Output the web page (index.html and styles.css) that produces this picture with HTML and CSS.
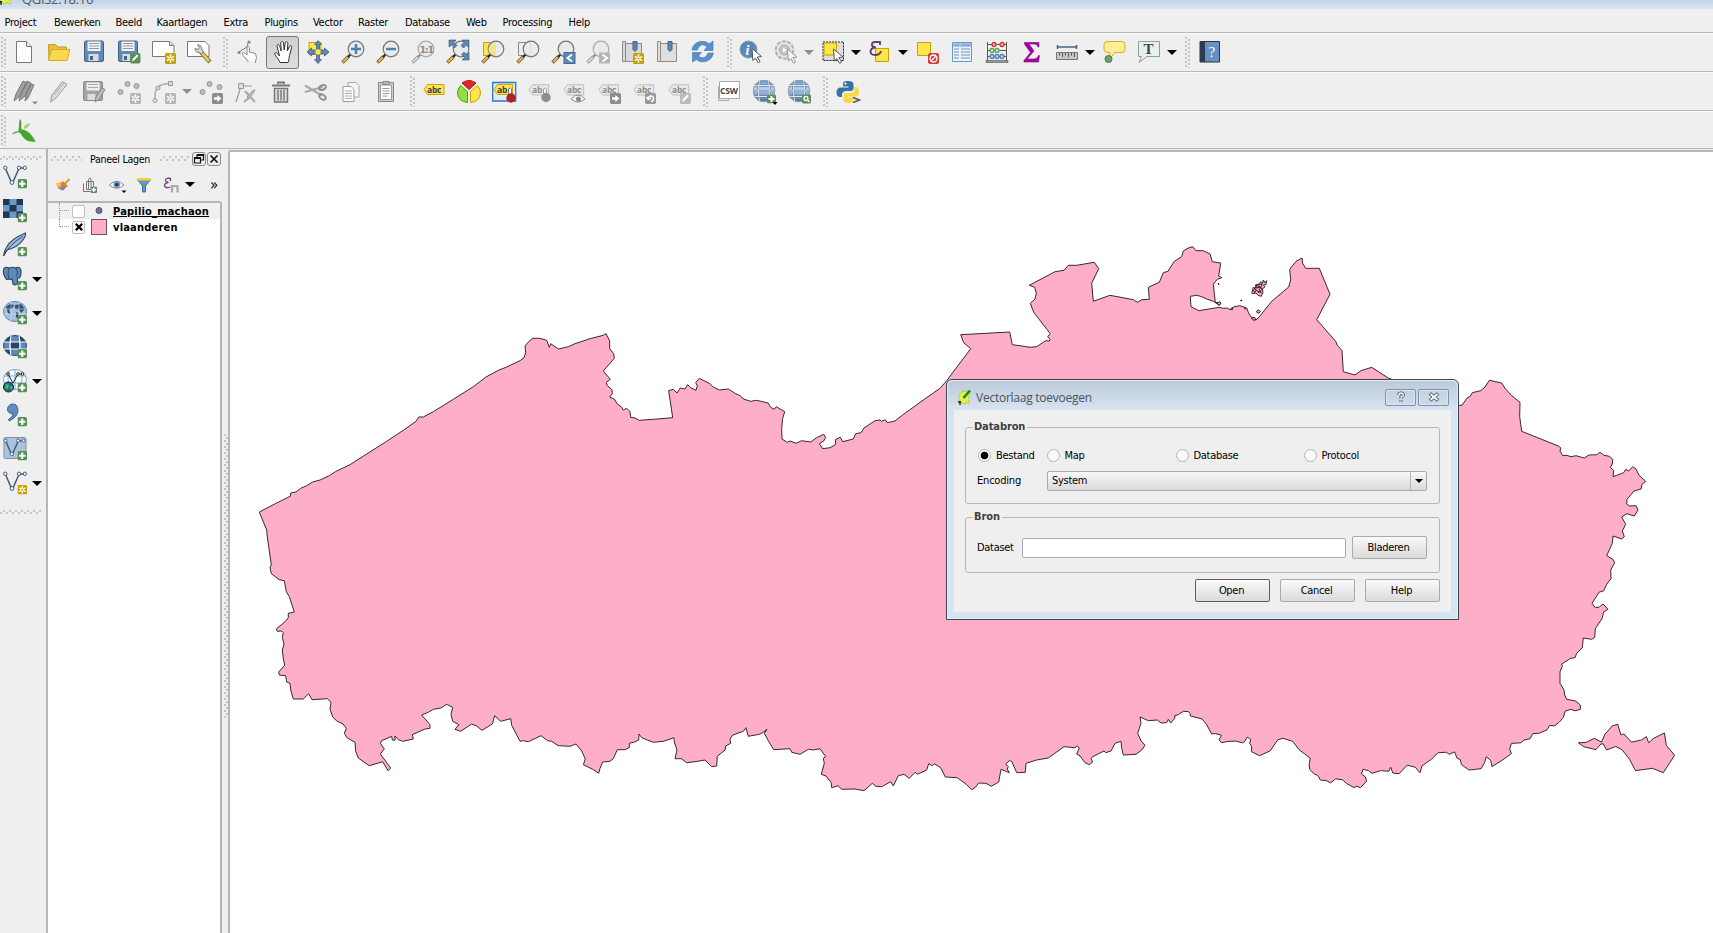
FILE: index.html
```
<!DOCTYPE html>
<html lang="nl">
<head>
<meta charset="utf-8">
<title>QGIS</title>
<link rel="stylesheet" href="styles.css">
</head>
<body>
<svg class="defs" width="0" height="0">
  <defs>
    <linearGradient id="gBlue" x1="0" y1="0" x2="0" y2="1"><stop offset="0" stop-color="#5f97d3"/><stop offset=".4" stop-color="#b5d3f3"/><stop offset="1" stop-color="#3f74b0"/></linearGradient>
    <symbol id="plus" viewBox="0 0 9 9"><rect width="9" height="9" rx="1.5" fill="#5b8f5a"/><path d="M4.5 1.5v6M1.5 4.5h6" stroke="#fff" stroke-width="2"/></symbol>
    <symbol id="star" viewBox="0 0 11 11"><rect width="11" height="11" rx="1.5" fill="#c8a000"/><path d="M5.5 1.2v8.6M1.8 3.4l7.4 4.2M9.2 3.4L1.8 7.6" stroke="#fff" stroke-width="1.5"/><circle cx="5.5" cy="5.5" r="1.1" fill="#c8a000"/></symbol>
    <symbol id="starg" viewBox="0 0 11 11"><rect width="11" height="11" rx="1.5" fill="#b5b5b5"/><path d="M5.5 1.2v8.6M1.8 3.4l7.4 4.2M9.2 3.4L1.8 7.6" stroke="#fff" stroke-width="1.5"/><circle cx="5.5" cy="5.5" r="1.1" fill="#b5b5b5"/></symbol>
    <symbol id="go" viewBox="0 0 11 11"><rect width="11" height="11" rx="1.5" fill="#8c8c8c"/><path d="M2 4.3h3.4V2L9.4 5.5 5.4 9V6.7H2z" fill="#fff"/></symbol>
    <symbol id="lens" viewBox="0 0 24 24"><path d="M1.500 22.500l6-6" stroke="#555" stroke-width="3.400"/><path d="M2 22l5-5" stroke="#f2b92c" stroke-width="2"/><path d="M7 17l3-3" stroke="#222" stroke-width="2.200"/><circle cx="15" cy="9" r="7.800" fill="#e9e9e9" fill-opacity=".85" stroke="#777" stroke-width="1.200"/></symbol>
    <symbol id="lensg" viewBox="0 0 24 24"><path d="M1.500 22.500l6-6" stroke="#999" stroke-width="3.200"/><path d="M2 22l5-5" stroke="#e8e8e8" stroke-width="1.500"/><path d="M7 17l3-3" stroke="#888" stroke-width="2"/><circle cx="15" cy="9" r="7.800" fill="#e9e9e9" fill-opacity=".85" stroke="#aaa" stroke-width="1.200"/></symbol>
    <symbol id="cur" viewBox="0 0 12 16"><path d="M1 1l9.500 8-4.200.5 2.800 4.500-2 1.300-2.700-4.700L1.800 13z" fill="#fff" stroke="#555" stroke-width="1"/></symbol>
    <symbol id="tag" viewBox="0 0 24 24"><path d="M2 9.500l3.500-4.700H21.700V15H5.500z" fill="#e9e9e9" stroke="#bdbdbd"/></symbol>
    <symbol id="vee" viewBox="0 0 24 24"><path d="M2.500 3.500l6 14M10 17l5.500-12.500M17 3h4" stroke="#3f5a75" stroke-width="1.500" fill="none"/><g fill="#fff" stroke="#3f5a75"><circle cx="2.300" cy="2.800" r="1.700"/><circle cx="16" cy="2.800" r="1.700"/><circle cx="21.800" cy="2.800" r="1.700"/><circle cx="9" cy="17.500" r="1.900"/></g></symbol>
    <symbol id="globe" viewBox="0 0 24 24"><circle cx="12" cy="11" r="10.800" fill="url(#gBlue)" stroke="#8d9aa8"/><path d="M7.500 1q-3 10 0 20M16.500 1q3 10 0 20M2.500 5.500h19M1 11h22M2.500 16.500h19" stroke="#64758a" stroke-width="1.800" fill="none"/><path d="M7.500 1q-3 10 0 20M16.500 1q3 10 0 20M2.500 5.500h19M1 11h22M2.500 16.500h19" stroke="#e2e6ea" stroke-width="1" fill="none"/></symbol>
    <symbol id="qgis" viewBox="0 0 13 15"><path d="M8 1C3 1 1 4 1 8s3 6 6 6l1-2 2 2 2-1-2-3 2-6-2-3z" fill="#dff04b" stroke="#b1bd3d" stroke-dasharray="1.500 1"/><path d="M12 .5L5.500 8" stroke="#108b28" stroke-width="2.600"/><path d="M0 12h3m-1-1v4" stroke="#222" stroke-width="1.300"/></symbol>
  </defs>
</svg>

<div class="window">
  <div class="titlebar"><svg width="13" height="15"><use href="#qgis"/></svg><span>QGIS2.18.16</span></div>
  <nav class="menubar"><span>Project</span><span>Bewerken</span><span>Beeld</span><span>Kaartlagen</span><span>Extra</span><span>Plugins</span><span>Vector</span><span>Raster</span><span>Database</span><span>Web</span><span>Processing</span><span>Help</span></nav>

  <div class="toolbar">
    <i class="grip first"></i>
    <b class="slot"><svg viewBox="0 0 24 24"><path d="M4.500 1.500h10l5 5v16h-15z" fill="#fff" stroke="#777"/><path d="M14.500 1.500v5h5" fill="#eee" stroke="#777"/></svg></b>
    <b class="slot"><svg viewBox="0 0 24 24"><path d="M1.500 4.500h7l2 2.500h9v4h-15L2 20z" fill="#e9bf3c" stroke="#c59a25"/><path d="M4.500 9.500h18.500L20 20.500H1.500z" fill="#fbd84e" stroke="#d8aa2e"/></svg></b>
    <b class="slot"><svg viewBox="0 0 24 24"><rect x="2.500" y="1" width="19" height="20.500" rx="1.500" fill="#5e8ab8" stroke="#49617b"/><path d="M5.500 1.500h13v9.500h-13z" fill="#f4f6f8"/><path d="M7 3.500h10M7 6h10M7 8.500h10" stroke="#8b99a7"/><path d="M6.500 14h10v7h-10z" fill="#d7dde4"/><path d="M8 16h3v4H8z" fill="#49617b"/></svg></b>
    <b class="slot"><svg viewBox="0 0 24 24"><rect x="1.500" y="1" width="19" height="20.500" rx="1.500" fill="#5e8ab8" stroke="#49617b"/><path d="M4.500 1.500h13v9.500h-13z" fill="#f4f6f8"/><path d="M6 3.500h10M6 6h10M6 8.500h10" stroke="#8b99a7"/><path d="M5.500 14h10v7h-10z" fill="#d7dde4"/><path d="M7 16h3v4H7z" fill="#49617b"/><rect x="13" y="13" width="10.500" height="10.500" rx="2" fill="#5b8f5a"/><path d="M15 21.500l1-3 4-4 1.500 1.500-4 4z" fill="#fff"/></svg></b>
    <b class="slot"><svg viewBox="0 0 24 24"><path d="M.5 1.500h17.500l4 4v11H.5z" fill="#fff" stroke="#777"/><path d="M17.500 1.500v4h4" fill="#ddd" stroke="#777"/><use href="#star" x="13" y="13" width="11" height="11"/></svg></b>
    <b class="slot"><svg viewBox="0 0 24 24"><path d="M.5 1.500h17.500l4 4v11H.5z" fill="#fff" stroke="#777"/><path d="M14 12l9 10" stroke="#8d7a37" stroke-width="4.500"/><path d="M15 13l7 8" stroke="#ecd064" stroke-width="2.500"/><path d="M8 8.500q0 4 4.500 4.200L14.500 14l2-2-1.500-2.500Q15 5 10.500 4.800l2 3-1.500 1.700z" fill="#d8d8d8" stroke="#777"/></svg></b>
    <i class="grip"></i>
    <b class="slot"><svg viewBox="0 0 24 24"><path d="M3 12l8-5 1.500-5.500 2 .5" stroke="#777" fill="none"/><path d="M7.500 16q-2-2-1-3t3 .5l1.500 1.500V8c0-2 2.500-2 2.500 0v4l6 1.500 1 4-1.500 5.500" fill="#fff" stroke="#888"/><path d="M7.500 16l5 6" stroke="#888"/><circle cx="3" cy="12.500" r="1.500" fill="#888"/><circle cx="13" cy="2" r="1.500" fill="#888"/></svg></b>
    <b class="slot on"><svg viewBox="0 0 24 24"><path d="M9 22.500c-1-3-3.500-5-5-8-1-2 1.500-2.500 3-.5l1.500 2L6 6c0-2 2-2 2.700 0l1.500 5L9.700 3c0-2 2.600-2 2.800 0l.7 7 1-7c.3-2 2.600-1.500 2.600.4l-.4 7.500 2-4.500c1-1.500 2.700-.7 2.200 1l-2.100 8.100c-.6 3-.5 5-1.500 7z" fill="#fff" stroke="#333"/></svg></b>
    <b class="slot"><svg viewBox="0 0 24 24"><path d="M3 2.500h12v12H3z" fill="#fde64b" stroke="#c8a000"/><path d="M12 .5l3.500 4h-2V10h5V8l4.500 4-4.500 4v-2h-5v5.500h2L12 23.500l-3.500-4h2V14h-5v2L1 12l4.500-4v2h5V4.500h-2z" fill="#5c88b8" stroke="#38516d" stroke-width=".7"/><path d="M9.500 9.500h5v5h-5z" fill="#fde64b"/></svg></b>
    <b class="slot"><svg viewBox="0 0 24 24"><use href="#lens"/><path d="M15 4v10M10 9h10" stroke="#4c80b5" stroke-width="2.500"/></svg></b>
    <b class="slot"><svg viewBox="0 0 24 24"><use href="#lens"/><path d="M10 9h10" stroke="#4c80b5" stroke-width="2.500"/></svg></b>
    <b class="slot"><svg viewBox="0 0 24 24"><use href="#lensg"/><text x="8.800" y="12.500" class="t8b">1:1</text></svg></b>
    <b class="slot"><svg viewBox="0 0 24 24"><use href="#lens"/><path d="M3 0h7L8 2.500l3 3L8.500 8l-3-3L3 7zM23 0v7l-2.500-2-3 3L15 5.500l3-3L16 0zM23 20h-7l2.500-2.500-3-3 2.500-2.500 3 3L23 12.500z" fill="#5c88b8" stroke="#38516d" stroke-width=".6"/></svg></b>
    <b class="slot"><svg viewBox="0 0 24 24"><path d="M2.500 2.500h12v13h-12z" fill="#fde64b" stroke="#c8a000"/><use href="#lens"/><path d="M9 5h5.500v10H12q-7-4-3-10z" fill="#f3e589"/></svg></b>
    <b class="slot"><svg viewBox="0 0 24 24"><path d="M2.500 2.500h12v13h-12z" fill="#eee" stroke="#888"/><use href="#lens"/></svg></b>
    <b class="slot"><svg viewBox="0 0 24 24"><use href="#lens"/><rect x="13" y="12.500" width="11" height="11" fill="#5c88b8" stroke="#47698c"/><path d="M21 14.500l-4.500 3.500 4.500 3.500" stroke="#fff" stroke-width="2" fill="none"/></svg></b>
    <b class="slot"><svg viewBox="0 0 24 24"><use href="#lensg"/><rect x="13" y="12.500" width="11" height="11" fill="#b5b5b5"/><path d="M16.500 14.500L21 18l-4.500 3.500" stroke="#fff" stroke-width="2" fill="none"/></svg></b>
    <b class="slot"><svg viewBox="0 0 24 24"><path d="M1.500 1.500h3v20h-3zM4.500 3.500h16v18h-16z" fill="#d9d9d9" stroke="#8b8b8b"/><path d="M12 1.500h4v8l-2 2-2-2z" fill="#5c88b8" stroke="#3e5f80"/><use href="#star" x="12" y="13" width="11" height="11"/></svg></b>
    <b class="slot"><svg viewBox="0 0 24 24"><path d="M1.500 1.500h3v20h-3zM4.500 3.500h16v18h-16z" fill="#dedede" stroke="#8b8b8b"/><path d="M12 1.500h4v8l-2 2-2-2z" fill="#5c88b8" stroke="#3e5f80"/></svg></b>
    <b class="slot"><svg viewBox="0 0 24 24"><path d="M1 10C2 1 14-1 18 4l4-3v9.500h-9l3-3.500C12 3 8 5 6.500 10zM22.500 13C21 22 10 24 5.500 19.500L1.500 22v-9.500h9l-3 3.500c4 3.500 8 1.500 9.500-3z" fill="#5a90cc" stroke="#3e74b0" stroke-width=".6"/></svg></b>
    <i class="grip g13"></i>
    <b class="slot"><svg viewBox="0 0 24 24"><circle cx="9.500" cy="9.500" r="8.500" fill="#5c88b8" stroke="#7f9dbd"/><text x="6.500" y="15" class="info">i</text><use href="#cur" x="12" y="7.500" width="12" height="16"/></svg></b>
    <b class="slot dim"><svg viewBox="0 0 24 24"><circle cx="10.500" cy="10" r="8.800" fill="#ddd" stroke="#888" stroke-width="2" stroke-dasharray="4 1.500"/><circle cx="10.500" cy="10" r="5" fill="#aaa" stroke="#777"/><path d="M9 7.500l4 2.500-4 2.500z" fill="#fff"/><use href="#cur" x="12.500" y="8" width="12" height="16"/></svg></b>
    <i class="drop gray"></i>
    <b class="slot"><svg viewBox="0 0 24 24"><rect x="2" y="2" width="20.500" height="18.500" fill="#ddd" stroke="#222" stroke-dasharray="2 1"/><path d="M3 3h12.500v12H3z" fill="#fde64b" stroke="#c8a000"/><use href="#cur" x="11" y="8" width="13" height="16"/></svg></b>
    <i class="drop"></i>
    <b class="slot"><svg viewBox="0 0 24 24"><path d="M7.500 8.500h13v13h-13z" fill="#fde64b" stroke="#c8a000"/><path d="M12 5V2H7Q3.500 2 4 5q.5 2.500 4 2.500Q2.500 8 2.500 11.500T7 15q5 0 6-4" fill="none" stroke="#653d73" stroke-width="1.900"/></svg></b>
    <i class="drop"></i>
    <b class="slot"><svg viewBox="0 0 24 24"><path d="M2.500 2.500h13v13h-13z" fill="#fde64b" stroke="#c8a000"/><rect x="13" y="13" width="11" height="11" rx="2" fill="#da3b3b"/><circle cx="18.500" cy="18.500" r="3.500" fill="#da3b3b" stroke="#fff" stroke-width="1.300"/><path d="M16 21l5-5" stroke="#fff" stroke-width="1.300"/></svg></b>
    <b class="slot"><svg viewBox="0 0 24 24"><path d="M2.500 2.500h19v19h-19z" fill="#eaf2fa" stroke="#6a96c6"/><path d="M3 3h18v4H3z" fill="#a8c8ea"/><path d="M4 5h5m2 0h9M4 9h5m2 0h9M4 12h5m2 0h9M4 15h5m2 0h9M4 18h5m2 0h9" stroke="#6a96c6" stroke-width="1.100"/></svg></b>
    <b class="slot"><svg viewBox="0 0 24 24"><path d="M2.500 2v19M21.500 2v19M2.500 4.500h19M2.500 10.500h19M2.500 16.500h19" stroke="#555" fill="none"/><path d="M1 20.500h22v2H1z" fill="#999" stroke="#555" stroke-width=".6"/><g stroke-width="1.300"><g fill="#f3b5b5" stroke="#c33"><circle cx="9" cy="4.500" r="2"/><circle cx="17" cy="4.500" r="2"/></g><g fill="#cfeccb" stroke="#5aa457"><circle cx="7" cy="10.500" r="2"/><circle cx="12" cy="10.500" r="2"/></g><g fill="#bcd4ea" stroke="#4c80b5"><circle cx="7" cy="16.500" r="2"/><circle cx="12" cy="16.500" r="2"/><circle cx="17" cy="16.500" r="2"/></g></g></svg></b>
    <b class="slot"><svg viewBox="0 0 24 24"><path d="M4.500 2.500H19v4.500h-1Q17.500 4 14 4H9l5 7-7 8h7q3.500 0 4.500-3.500h1L18.500 22H4v-1.500l6.500-8L4.500 4z" fill="#a400a4" stroke="#7d007d" stroke-width=".6"/></svg></b>
    <b class="slot"><svg viewBox="0 0 24 24"><path d="M2 7h20M2.500 5v4M21.500 5v4" stroke="#46658a" stroke-width="1.600"/><path d="M1.500 12.500h21v7h-21z" fill="#c6c6c6" stroke="#777"/><path d="M4.500 13v2.500M7.500 13v4M10.500 13v2.500M13.500 13v4M16.500 13v2.500M19.500 13v4" stroke="#555"/></svg></b>
    <i class="drop"></i>
    <b class="slot"><svg viewBox="0 0 24 24"><path d="M5 1.500h15q3 0 3 3v5q0 3-3 3h-7L7.500 19 8 12.500H5q-3 0-3-3v-5q0-3 3-3z" fill="#fbef96" stroke="#d2ac28"/><circle cx="6.500" cy="19" r="3.500" fill="#6ba46a" stroke="#4c774b"/></svg></b>
    <b class="slot"><svg viewBox="0 0 24 24"><path d="M1.500 1.500h21v15H10L2 22.500l2.500-6h-3z" fill="#e6eff2" stroke="#999"/><text x="6.500" y="14" class="tee">T</text></svg></b>
    <i class="drop"></i>
    <i class="grip"></i>
    <b class="slot"><svg viewBox="0 0 24 24"><path d="M2 1.500h19.500v20.500H2z" fill="#6492c4" stroke="#333"/><path d="M2 1.500h5v20.500H2z" fill="#2d3d50"/><text x="10.500" y="16.500" class="q">?</text></svg></b>
  </div>

  <div class="toolbar second">
    <i class="grip first"></i>
    <b class="slot"><svg viewBox="0 0 24 24"><path d="M2 21l2-7L11 1l4 2-7 13zM7 21l2-7L15 1l4 2-6 13zM13 21l1-6 5-11 3 1-6 13z" fill="#9f9f9f" stroke="#777"/><path d="M20 21.500h6l-3 3z" fill="#888"/></svg></b>
    <b class="slot"><svg viewBox="0 0 24 24"><path d="M3.500 22l1.500-7L15.500 1.500l4.500 3L9 18z" fill="#ddd" stroke="#999"/><path d="M7 15L17 3" stroke="#aaa"/></svg></b>
    <b class="slot"><svg viewBox="0 0 24 24"><rect x="1.500" y="1.500" width="19" height="19" rx="1.500" fill="#a4a4a4" stroke="#8a8a8a"/><path d="M4.500 2.500h13v8h-13z" fill="#eee"/><path d="M6 4.500h10M6 7.500h10" stroke="#aaa"/><path d="M5.500 14h8v6h-8z" fill="#ddd"/><path d="M13 22l1-5 6-9 3 1.500-5.500 9.500z" fill="#bbb" stroke="#888"/></svg></b>
    <b class="slot"><svg viewBox="0 0 24 24"><g fill="#bbb" stroke="#999"><circle cx="3.500" cy="12" r="2.500"/><circle cx="10.500" cy="4" r="2.500"/><circle cx="19.500" cy="6" r="2.500"/></g><use href="#starg" x="13" y="13" width="11" height="11"/></svg></b>
    <b class="slot"><svg viewBox="0 0 24 24"><path d="M3 21V14Q4 4 17 3.500" stroke="#aaa" stroke-width="1.500" fill="none"/><g fill="#ddd" stroke="#999"><circle cx="3" cy="20.500" r="2"/><circle cx="6" cy="8" r="2"/><path d="M16.500 1.500h4v4h-4z"/></g><use href="#starg" x="13" y="13" width="11" height="11"/></svg></b>
    <i class="drop gray"></i>
    <b class="slot"><svg viewBox="0 0 24 24"><g fill="#bbb" stroke="#999"><circle cx="3.500" cy="12" r="2.500"/><circle cx="10.500" cy="4" r="2.500"/><circle cx="20.500" cy="7" r="2.500"/></g><use href="#go" x="13" y="13" width="11" height="11"/></svg></b>
    <b class="slot"><svg viewBox="0 0 24 24"><path d="M2 22L7 6M9 6h9" stroke="#999" stroke-width="1.200" fill="none"/><path d="M4.500 3.500h5v5h-5z" fill="#ddd" stroke="#999"/><path d="M11 11l10 11M10 22l6-5" stroke="#aaa" stroke-width="2.200"/><path d="M13 17l5-6 3-1.500-1 3-5 6z" fill="#bbb" stroke="#999" stroke-width=".8"/></svg></b>
    <b class="slot"><svg viewBox="0 0 24 24"><path d="M3 5.500h18M9 4V2.500h6V4" stroke="#777" stroke-width="1.800" fill="none"/><path d="M5.500 8.500h13V22h-13z" fill="#ddd" stroke="#777" stroke-width="1.500"/><path d="M9 10v10.500M12 10v10.500M15 10v10.500" stroke="#888" stroke-width="1.700"/></svg></b>
    <b class="slot"><svg viewBox="0 0 24 24"><path d="M1 5.500l17 10M1 12l18-5" stroke="#aaa" stroke-width="2.200"/><ellipse cx="18.500" cy="7.500" rx="3.500" ry="2.300" fill="none" stroke="#888" stroke-width="1.700" transform="rotate(-22 18.500 7.500)"/><ellipse cx="18.500" cy="17" rx="3.500" ry="2.300" fill="none" stroke="#888" stroke-width="1.700" transform="rotate(35 18.500 17)"/></svg></b>
    <b class="slot"><svg viewBox="0 0 24 24"><path d="M9 2.500h8l3 3V17H9z" fill="#f5f5f5" stroke="#aaa"/><path d="M4 6.500h8l3 3V21.500H4z" fill="#fff" stroke="#999"/><path d="M6 11h7M6 13.500h7M6 16h7M6 18.500h7" stroke="#aaa"/></svg></b>
    <b class="slot"><svg viewBox="0 0 24 24"><path d="M4.500 2.500h15v19h-15z" fill="#ccc" stroke="#888"/><path d="M6.500 5h11v14.500h-11z" fill="#fff" stroke="#999"/><path d="M9 1.500h6v3H9z" fill="#bbb" stroke="#888"/><path d="M8.500 8.500h7M8.500 11h7M8.500 13.500h7M8.500 16h5" stroke="#999"/></svg></b>
    <i class="grip g13"></i>
    <b class="slot"><svg viewBox="0 0 24 24"><path d="M2 9.500l3.500-5H22v10H5.500z" fill="#fce44d" stroke="#cba30c"/><text x="5" y="12.500" class="abc">abc</text></svg></b>
    <b class="slot"><svg viewBox="0 0 24 24"><path d="M12 9.500L5 3q7-5 14 0z" fill="#e22a22" stroke="#a11"/><path d="M10.500 11.500V22.500Q1 21.500 .5 13q0-4 3-7.500z" fill="#8fe040" stroke="#4d9c1c"/><path d="M13.500 11.500V22.500Q23 21.500 23.500 13q0-4-3-7.500z" fill="#fde64b" stroke="#c8a000"/></svg></b>
    <b class="slot"><svg viewBox="0 0 24 24"><path d="M.7 2.500h23v18.500H.7z" fill="#dce9f7" stroke="#2a78c8" stroke-width="1.300"/><path d="M2 9.500l3.500-5H20.500v10H5.500z" fill="#fce44d" stroke="#cba30c"/><text x="5" y="12.500" class="abc">ab</text><path d="M16.500 15V9q2-2 3 0v6" fill="#fff" stroke="#777"/><circle cx="19" cy="18" r="4.700" fill="#ae2222"/></svg></b>
    <b class="slot"><svg viewBox="0 0 24 24"><use href="#tag"/><text x="5" y="12.500" class="abc g">ab</text><path d="M16.500 15V9q2-2 3 0v6" fill="#fff" stroke="#999"/><circle cx="19" cy="17.500" r="4.700" fill="#8e8e8e"/></svg></b>
    <b class="slot"><svg viewBox="0 0 24 24"><use href="#tag"/><text x="5" y="12.500" class="abc g">abc</text><path d="M9 19q7-8 14 0q-7 6-14 0z" fill="#fff" stroke="#888"/><circle cx="16.500" cy="19" r="2.500" fill="#888"/></svg></b>
    <b class="slot"><svg viewBox="0 0 24 24"><use href="#tag"/><text x="5" y="12.500" class="abc g">abc</text><use href="#go" x="13" y="13" width="11" height="11"/></svg></b>
    <b class="slot"><svg viewBox="0 0 24 24"><use href="#tag"/><text x="5" y="12.500" class="abc g">abc</text><rect x="13" y="13" width="11" height="11" rx="1.500" fill="#999"/><path d="M16 19a2.800 2.800 0 1 1 3 2.500M14.500 17l1.700 2.500L19 18" stroke="#fff" stroke-width="1.500" fill="none"/></svg></b>
    <b class="slot"><svg viewBox="0 0 24 24"><use href="#tag"/><text x="5" y="12.500" class="abc g">abc</text><rect x="13" y="13" width="11" height="11" rx="1.500" fill="#bbb"/><path d="M15 22l1-3 4.500-4.500L22 16l-4.500 4.500z" fill="#fff"/></svg></b>
    <i class="grip g15"></i>
    <b class="slot"><svg viewBox="0 0 24 24"><path d="M1.500 6v14.500h10V18" fill="#eee" stroke="#aaa"/><path d="M2.500 1.500h20v17h-20z" fill="#fff" stroke="#aaa"/><text x="3" y="13.500" class="csw">CSW</text></svg></b>
    <b class="slot"><svg viewBox="0 0 24 24"><use href="#globe"/><use href="#plus" x="15" y="14.500" width="9" height="9"/><path d="M20.500 22h5l-2.500 3z"/></svg></b>
    <b class="slot"><svg viewBox="0 0 24 24"><use href="#globe"/><rect x="15" y="14.500" width="9" height="9" rx="1.500" fill="#5b8f5a"/><circle cx="19" cy="18.500" r="2" fill="none" stroke="#fff" stroke-width="1.300"/><path d="M20.500 20l2 2" stroke="#fff" stroke-width="1.300"/></svg></b>
    <i class="grip"></i>
    <b class="slot"><svg viewBox="0 0 24 24"><path d="M11.500 1C7.500 1 7 2.500 7 4v2.500h5.500v1H4.500C2 7.500.5 9.500.5 12.500S2 17 4 17h2v-2.500C6 12.500 8 11 10 11h5c1.500 0 2.500-1 2.500-2.500V4c0-2-2-3-6-3z" fill="#3772a4"/><path d="M12.500 23c4 0 4.500-1.500 4.500-3v-2.500h-5.500v-1h8c2.500 0 3.500-2 3.500-5S21.500 7 20 7h-1.500v3c0 2-2 3-3.500 3h-5c-1.500 0-2.500 1-2.500 2.500V20c0 2 2 3 5 3z" fill="#ffd83f"/><circle cx="9.500" cy="3.700" r="1.100" fill="#fff"/><path d="M17 17.500l6.500 2.500-6.500 2.500" stroke="#555" stroke-width="1.500" fill="none"/></svg></b>
  </div>

  <div class="toolbar last">
    <i class="grip first"></i>
    <b class="slot"><svg viewBox="0 0 24 24"><path d="M7.500 0l1.800 2v8q8 1 14.500 12.500Q13 24 9 15L6.500 13 0 15.500q1-3 6.500-3.500z" fill="#43a82b"/><path d="M12 8q1-3.500 6-3.500Q17 9 12 10z" fill="#a5cd83"/></svg></b>
  </div>

  <div class="main">
    <aside class="sidebar">
      <i class="hgrip"></i>
      <div class="tool"><svg viewBox="0 0 24 24"><use href="#vee"/><use href="#plus" x="14.500" y="14" width="9.500" height="9.500"/></svg></div>
      <div class="tool"><svg viewBox="0 0 24 24"><path d="M0 0h20v19H0z" fill="#6d97c6"/><path d="M0 0h6.500v6H0zM13.500 0h6.500v6h-6.500zM6.500 6h7v6.500h-7zM0 12.500h6.500V19H0zM13.500 12.500h6.500V19h-6.500z" fill="#203754"/><use href="#plus" x="14.500" y="14" width="9.500" height="9.500"/></svg></div>
      <div class="tool"><svg viewBox="0 0 24 24"><path d="M.5 23Q1 18 4 13.500 8 6 22.500 0 23 3.500 19 8 15 14 4 17z" fill="#9dbbdd" stroke="#334d68" stroke-width="1.200"/><path d="M.5 23Q5 13 20 3" stroke="#334d68" fill="none"/><use href="#plus" x="14.500" y="14" width="9.500" height="9.500"/></svg></div>
      <div class="tool"><svg viewBox="0 0 24 24"><path d="M1 1.500Q3-.5 6.500 1q3-1.500 6 0Q16-.5 17.500 2q1.500 4-1 9h-2v5.500q-2 2.500-4.500.5L9 12q-2 1-3 0l-2.500.5Q-1 6 1 1.500z" fill="#5d8ab9" stroke="#2d4a68" stroke-width="1.200"/><path d="M6.500 1Q4 5 6 12M12.500 1q3.500 4 .5 8.500" stroke="#2d4a68" fill="none"/><use href="#plus" x="14.500" y="14" width="9.500" height="9.500"/></svg><i class="drop"></i></div>
      <div class="tool"><svg viewBox="0 0 24 24"><ellipse cx="12" cy="10.500" rx="11.500" ry="10" fill="#a3c0e1" stroke="#5a80ab"/><path d="M3 6l4-3 4 1-2 4-3 1 2 5-3-2zM12 4l6-1 4 5-4 4-2-3-4-1zM13 11l3 1-1 6-2-2z" fill="#2f4d70"/><path d="M1 8h22M1 13h22M8 1v19M16 1v19" stroke="#e1ebf6" stroke-width=".6"/><use href="#plus" x="14.500" y="14" width="9.500" height="9.500"/></svg><i class="drop"></i></div>
      <div class="tool"><svg viewBox="0 0 24 24"><ellipse cx="12" cy="10.500" rx="11.500" ry="10" fill="#5c8ab9" stroke="#2b4666"/><path d="M8 7h8v7H8zM2 7h5L9 1Q4 2 2 7zM15 1l2 6h5q-2-5-7-6zM2 14h5l2 6q-5-1-7-6z" fill="#2b4666"/><path d="M.5 7h23M.5 14h23M8 1q-2 9.500 0 19M16 1q2 9.500 0 19" stroke="#fff" stroke-width="1.200" fill="none"/><use href="#plus" x="14.500" y="14" width="9.500" height="9.500"/></svg></div>
      <div class="tool"><svg viewBox="0 0 24 24"><ellipse cx="12" cy="10.500" rx="11.500" ry="10" fill="#fff" stroke="#7ba3cf"/><path d="M1 7h22M1 14h22M12 1v19M6 2q-2 8 0 17M18 2q2 8 0 17" stroke="#7ba3cf" fill="none"/><path d="M5 5l5 9 5-9h5" stroke="#222" fill="none"/><g fill="#fff" stroke="#222"><circle cx="5" cy="5" r="1.300"/><circle cx="15" cy="5" r="1.300"/><circle cx="19.500" cy="5" r="1.300"/></g><circle cx="5.500" cy="18" r="5" fill="#1e6b8e" stroke="#122"/><path d="M3 15l3 1-1 4-3-1zM7 17l3 1-2 3z" fill="#4bc04a"/><use href="#plus" x="14.500" y="14" width="9.500" height="9.500"/></svg><i class="drop"></i></div>
      <div class="tool"><svg viewBox="0 0 24 24"><path d="M5.500 16.500q4.500-2.500 4.500-6Q4 10.500 4.500 5.500 5.500 1 10 1t5 6q0 7-9 11z" fill="#5e8cc0" stroke="#40658e"/><use href="#plus" x="14.500" y="14" width="9.500" height="9.500"/></svg></div>
      <div class="tool"><svg viewBox="0 0 24 24"><rect x="1" y=".5" width="22" height="21" rx="1.500" fill="#adc3dc" stroke="#7893b1"/><use href="#vee" x="0" y="1" width="23" height="22"/><use href="#plus" x="14.500" y="14" width="9.500" height="9.500"/></svg></div>
      <div class="tool"><svg viewBox="0 0 24 24"><use href="#vee"/><use href="#star" x="14.500" y="14" width="9.500" height="9.500"/></svg><i class="drop"></i></div>
      <i class="hgrip end"></i>
    </aside>

    <section class="panel">
      <header><i></i><span>Paneel Lagen</span><i></i>
        <b><svg viewBox="0 0 12 12"><path d="M4 1.500h6.500V7H8M4 1.500V4M1.500 4.500h6v5.500h-6zM4 2.500h6.500M1.500 5.500h6" fill="none" stroke="#111" stroke-width="1.200"/></svg></b>
        <b><svg viewBox="0 0 12 12"><path d="M2.500 2.500l7 7M9.500 2.500l-7 7" stroke="#111" stroke-width="1.700"/></svg></b>
      </header>
      <div class="ptools">
        <svg viewBox="0 0 16 16"><path d="M9.500 7L14.500 2" stroke="#d8a020" stroke-width="2.200"/><path d="M1 6l6.500-.5L12 9.500 8 13 3.500 12z" fill="#ee7a45"/><path d="M1 6l4-.3 1 3.300-2.500 1z" fill="#f0cf4a"/><path d="M7.500 9L11 10.500 8 13.500l-3-1z" fill="#5d8dc8"/><path d="M7 4.500l5.500 5" stroke="#b98a2a" stroke-width="1.600"/></svg>
        <svg viewBox="0 0 16 16"><path d="M1.500 6.500v8h7M4.500 4.500h7v8h-7zM6.500 12V2.500Q8-.5 9 2v9" fill="none" stroke="#777"/><use href="#plus" x="8.500" y="9.500" width="6.500" height="6.500"/></svg>
        <svg viewBox="0 0 16 16"><path d="M.5 8q7-7.500 14.500 0-7.500 6.500-14.500 0z" fill="#fff" stroke="#888"/><circle cx="7.800" cy="7.500" r="3.400" fill="#6c99c9"/><circle cx="7.800" cy="7.500" r="1.500" fill="#223"/><path d="M12.500 13.500h5L15 16z"/></svg>
        <svg viewBox="0 0 16 16"><path d="M1.500 2.500h13L9.500 9v6h-3V9z" fill="#6796ca" stroke="#466e9c"/><path d="M1.500 1h13v2.500h-13z" fill="#f3d32f"/></svg>
        <svg viewBox="0 0 16 16"><path d="M7.500 4V1.500Q2 .5 2.500 3.500 3 5.500 5.500 5.500 1.500 6 1.500 8.500q1 3.500 6 1.500" fill="none" stroke="#77417e" stroke-width="1.300"/><path d="M9 15.500V9h5.500v6.500" stroke="#aaa" fill="none" stroke-width="2.200"/></svg>
        <i class="drop"></i><span>»</span>
      </div>
      <div class="tree">
        <div class="row sel"><i class="branch"></i><i class="check"></i><svg width="18" height="16"><circle cx="9" cy="7.500" r="3" fill="#766f99" stroke="#55536e"/></svg><span class="cur">Papilio_machaon</span></div>
        <div class="row"><i class="branch end"></i><i class="check"><svg viewBox="0 0 10 10"><path d="M1 1l8 8M9 1L1 9" stroke="#000" stroke-width="2.800"/></svg></i><svg width="18" height="16"><rect x="1.500" y=".5" width="15" height="15" fill="#ffaec8" stroke="#72505c"/></svg><span>vlaanderen</span></div>
      </div>
    </section>

    <div class="splitter"><i></i></div>
    <div class="canvas"><svg id="map" viewBox="230 152 1483 781" width="1483" height="781"></svg></div>
  </div>
</div>

<div class="dialog">
  <div class="caption"><svg width="13" height="15"><use href="#qgis"/></svg><span>Vectorlaag toevoegen</span>
    <b><svg viewBox="0 0 12 12"><path d="M3.500 4Q4 2 6 2t2.500 2Q8.500 5 6 6.200V8M6 9v2" fill="none" stroke="#4a5360" stroke-width="3"/><path d="M3.500 4Q4 2 6 2t2.500 2Q8.500 5 6 6.200V8M6 9.300v1.400" fill="none" stroke="#fff" stroke-width="1.300"/></svg></b>
    <b><svg viewBox="0 0 12 12"><path d="M2 2.500l8 7M10 2.500l-8 7" stroke="#4a5360" stroke-width="3.600"/><path d="M2.500 3l7 6M9.500 3l-7 6" stroke="#fff" stroke-width="1.800"/></svg></b>
  </div>
  <div class="body">
    <fieldset class="source"><legend>Databron</legend>
      <div class="radios"><label><i class="on"></i>Bestand</label><label><i></i>Map</label><label><i></i>Database</label><label><i></i>Protocol</label></div>
      <div class="encoding"><span>Encoding</span><div class="combo"><span>System</span><i class="drop"></i></div></div>
    </fieldset>
    <fieldset class="bron"><legend>Bron</legend>
      <div class="dataset"><span>Dataset</span><div class="input"></div><div class="btn">Bladeren</div></div>
    </fieldset>
    <div class="actions"><div class="btn default">Open</div><div class="btn">Cancel</div><div class="btn">Help</div></div>
  </div>
</div>
<script src="map.js"></script>
</body>
</html>
```
FILE: styles.css
```
* { box-sizing: border-box; }
body { margin: 0; width: 1713px; height: 933px; overflow: hidden; background: #efefef; color: #000; font: 11px "DejaVu Sans Condensed", "DejaVu Sans", sans-serif; font-stretch: condensed; letter-spacing: -.3px; position: relative; }
svg { display: block; overflow: visible; flex: none; }
svg text { letter-spacing: 0; }
.defs { position: absolute; }
.window { height: 933px; display: flex; flex-direction: column; }
.titlebar { height: 10px; flex: none; background: linear-gradient(#c6d5e4, #d7e4f1); border-bottom: 1px solid #e8f0f8; display: flex; align-items: flex-end; overflow: hidden; font: 13px "Open Sans", sans-serif; color: #4b5561; }
.titlebar svg { margin: 0 0 4px -1px; }
.titlebar span { margin-left: 10px; line-height: 15px; margin-bottom: 2px; }
.menubar { height: 22px; flex: none; display: grid; grid-template-columns: 49.500px 61.500px 41px 67px 41px 48.500px 45px 47px 61px 36.500px 66px 40px; padding-left: 4.500px; line-height: 25px; white-space: nowrap; }
.toolbar { height: 39px; flex: none; display: flex; align-items: center; border-top: 1px solid #b6b6b6; box-shadow: inset 0 1px #fbfbfb; }
.toolbar.second, .toolbar.last { padding-top: 1px; }
.toolbar.last { height: 38px; padding-top: 2px; }
.slot { width: 35px; height: 34px; flex: none; display: flex; align-items: center; justify-content: center; }
.slot svg { width: 24px; height: 24px; }
.slot.on { width: 33px; margin: 0 1px; height: 33px; border: 1px solid #777; border-radius: 3px; background: linear-gradient(#cfcfcf, #dedede); }
.dim { opacity: .6; }
.grip { width: 14px; height: 31px; flex: none; background: radial-gradient(circle at 1px 1px, #c4c4c4 1px, transparent 1.300px) 7px 0 / 20px 4px, radial-gradient(circle at 1px 1px, #c4c4c4 1px, transparent 1.300px) 10px 2px / 20px 4px; }
.grip.first { width: 6px; background-position: 1px 0, 4px 2px; }
.g13 { width: 13px; }
.g15 { width: 15px; }
.drop { width: 12px; flex: none; display: flex; }
.drop::before { content: ""; border: 5px solid transparent; border-top-color: #000; border-bottom: 0; margin-left: 1px; }
.drop.gray::before { border-top-color: #8f8f8f; }
.main { flex: 1; display: flex; min-height: 0; border-top: 1px solid #b6b6b6; }
.sidebar { width: 48px; flex: none; border-right: 2px solid #b6b6b6; padding-top: 6px; }
.hgrip { display: block; height: 6px; width: 42px; background: radial-gradient(circle at 1px 1px, #c4c4c4 1px, transparent 1.300px) 0 3px / 6px 20px, radial-gradient(circle at 1px 1px, #c4c4c4 1px, transparent 1.300px) 3px 1px / 6px 20px; }
.hgrip.end { margin-top: 8px; }
.tool { height: 34px; display: flex; align-items: center; padding: 0 0 2px 3px; }
.tool svg { width: 24px; height: 24px; }
.tool .drop { margin-left: 4px; }
.panel { width: 174px; flex: none; display: flex; flex-direction: column; }
.panel header { display: grid; grid-template-columns: 36px 66px 37px 14px 14px; column-gap: 1px; height: 19px; padding: 2px 0 2px 2px; align-items: center; text-align: center; white-space: nowrap; flex: none; }
.panel header span { letter-spacing: -.25px; font-size: 10.500px; }
.panel header > i { height: 5px; margin: 0 4px 0 1px; background: radial-gradient(circle at 1px 1px, #c4c4c4 1px, transparent 1.300px) 0 3px / 6px 20px, radial-gradient(circle at 1px 1px, #c4c4c4 1px, transparent 1.300px) 3px 0 / 6px 20px; }
.panel header span + i { margin: 0 2px 0 6px; }
.panel header b { width: 14px; height: 14px; border: 1px solid #888; border-radius: 3px; background: #eee; }
.panel header b svg { width: 12px; height: 12px; }
.ptools { height: 33px; flex: none; display: flex; align-items: center; padding-left: 7px; gap: 11px; }
.ptools svg { width: 16px; height: 16px; }
.ptools .drop { width: 10px; margin-left: -6px; }
.ptools span { margin-left: 5px; font-size: 15px; line-height: 10px; }
.tree { flex: 1; background: #fff; border: solid #b6b6b6; border-width: 2px 2px 0 0; border-radius: 0 3px 0 0; font-weight: bold; letter-spacing: .2px; }
.row { height: 16px; display: flex; align-items: center; white-space: nowrap; }
.row.sel { background: #f0f0f0; }
.row .cur { text-decoration: underline; }
.row > svg { margin: 0 5px 0 5px; }
.branch { width: 10px; height: 16px; margin: 0 3px 0 11px; border-left: 1px dotted #999; position: relative; }
.branch::after { content: ""; position: absolute; left: 0; right: 0; top: 7px; border-top: 1px dotted #999; }
.branch.end { height: 8px; align-self: flex-start; }
.check { width: 13px; height: 13px; border: 1px solid #c0c0c0; border-radius: 2px; background: #fff; padding: 1.500px; }
.check svg { width: 8px; height: 8px; }
.splitter { width: 6px; flex: none; }
.splitter i { display: block; width: 5px; height: 284px; margin: 285px 0 0 2px; background: radial-gradient(circle at 1px 1px, #c4c4c4 1px, transparent 1.300px) 0 0 / 20px 6px, radial-gradient(circle at 1px 1px, #c4c4c4 1px, transparent 1.300px) 2px 3px / 20px 6px; }
.canvas { flex: 1; margin-top: 1px; border: solid #b6b6b6; border-width: 2px 0 0 2px; border-radius: 3px 0 0 0; background: #fff; overflow: hidden; }
.land { fill: #ffaec8; stroke: #38282e; stroke-width: 1; stroke-linejoin: round; }
.t8b { font: bold 9px "DejaVu Sans"; fill: #888; letter-spacing: -1px; }
.info { font: italic bold 14px "Liberation Serif"; fill: #fff; }
.tee { font: bold 15px "Liberation Serif"; fill: #444; }
.q { font: 15px "Liberation Serif"; fill: #fff; }
.abc { font: bold 8.500px "Open Sans"; fill: #3c3c3c; letter-spacing: -.2px; }
.abc.g { fill: #8c8c8c; }
.csw { font: bold 8.500px "Open Sans"; fill: #444; letter-spacing: -.2px; }

.dialog { position: absolute; left: 946px; top: 379px; width: 513px; height: 241px; border: 1px solid #3f444c; border-radius: 6px 6px 0 0; background: #d7e4f1; box-shadow: inset 0 0 0 1px #e6eef7; padding: 0 7px 7px; display: flex; flex-direction: column; }
.caption { height: 30px; margin: 0 -6px; padding: 2px 8px 0 10px; display: flex; align-items: center; background: linear-gradient(#bccad9, #d7e4f1); border-radius: 5px 5px 0 0; border-top: 1px solid #e6eef7; font: 12px "Open Sans", sans-serif; color: #4a525d; flex: none; }
.caption span { flex: 1; margin-left: 5px; letter-spacing: -.25px; margin-top: 2px; }
.caption svg { margin-top: 1px; }
.caption b { width: 31px; height: 17px; border: 1px solid #8090ad; border-radius: 2px; margin: 1px 0 0 2px; display: flex; align-items: center; justify-content: center; background: linear-gradient(#c3d0df, #cfdcea); box-shadow: inset 0 0 0 1px #dbe5f0; }
.caption b svg { width: 12px; height: 12px; margin: 0; }
.body { flex: 1; background: #efefef; padding: 10px 11px 0; }
fieldset { margin: 0; border: 1px solid #b6b6b6; border-radius: 3px; padding: 0 12px 0 11px; min-width: 0; }
legend { font-weight: bold; color: #404040; padding: 0 2px 0 1px; margin-left: -4px; line-height: 14px; height: 14px; letter-spacing: -.1px; }
.source { height: 84px; }
.bron { height: 63px; margin-top: 6px; }
.radios { display: grid; grid-template-columns: 68.500px 129px 128px 1fr; margin-top: 13.500px; height: 16px; padding-left: 1px; }
.radios label { display: flex; align-items: center; gap: 5px; }
.radios i { width: 13px; height: 13px; border: 1px solid #b4b4b4; border-radius: 50%; background: #fafafa; }
.radios i.on { background: radial-gradient(circle, #000 3.500px, #fafafa 4.200px); }
.encoding { display: flex; align-items: center; margin-top: 7px; height: 20px; }
.encoding > span { width: 70px; letter-spacing: -.2px; }
.combo { flex: 1; height: 20px; border: 1px solid #aaa; border-radius: 2px; background: linear-gradient(#f8f8f8, #dadada); display: flex; align-items: center; padding-left: 4px; }
.combo span { flex: 1; }
.combo .drop { width: 16px; height: 18px; align-items: center; justify-content: center; border-left: 1px solid #b6b6b6; }
.combo .drop::before { border-width: 4px 4px 0; margin: 0; }
.dataset { display: flex; align-items: center; margin-top: 12px; }
.dataset span { width: 45px; }
.input { flex: 1; height: 20px; border: 1px solid #aaa; border-radius: 2px; background: #fff; margin-right: 6px; }
.btn { width: 75px; height: 23px; border: 1px solid #aaa; border-radius: 2px; background: linear-gradient(#fafafa, #dadada); display: flex; align-items: center; justify-content: center; padding-right: 2px; }
.btn.default { border-color: #5d5d5d; }
.actions { display: flex; justify-content: flex-end; gap: 10px; margin-top: 6px; }
```
FILE: map.js
```
const boundary = [
  [240, 320, 3, "58,576 104,552 152,528 151,520 156,518 168,516 182,505 200,497 218,486 240,480 268,467 286,455 330,434 380,402 440,364 490,331 528,304 536,291 550,291 580,275 640,238 700,200 738,171 775,151 800,141 840,122 852,113 857,98 855,78 866,65 878,55 900,55 920,61 928,82 932,71 945,80 956,87 985,80 1005,71 1050,56 1090,46 1098,41 1109,63 1109,86 1121,101 1123,115 1090,153 1111,178 1099,187 1102,197 1116,209 1117,221 1109,231 1124,238 1131,251 1144,260 1150,270 1160,265 1170,275 1172,292 1185,294 1198,301 1240,298 1298,293 1286,212 1300,208 1311,219 1321,204 1335,207 1343,194 1352,203 1368,211 1372,197 1367,188"],
  [680, 360, 3, "58,55 90,71 98,80 118,90 145,87 167,101 181,107 190,117 212,124 230,121 264,129 272,142 283,148 289,140 314,155 308,175 305,205 306,237 322,247 330,243 348,250 365,242 392,246 410,233 431,223 437,232 432,242 418,251 428,266 450,263 466,254 467,238 481,232 488,245 520,237 527,221 543,218 552,204 585,182 600,180 604,184 616,179 622,188 645,183 665,167 720,127 780,85 800,62"],
  [930, 230, 3, "122,356 101,338 92,314 239,306 247,344 270,347 300,352 320,350 347,332 358,333 360,328 353,320 361,311 311,247 301,220 315,207 319,190 314,172 298,166 375,125 402,121 415,106 440,106 493,97 506,116 485,160 490,214 540,196 610,209 622,217 635,209 658,208 655,172 688,157 700,128 714,124 733,94 755,80 760,63 775,54 788,50 798,62 820,62 840,72 847,95 872,99 866,138 875,143 862,148 850,163 856,217 872,219 868,226 850,214 830,207 815,200 800,196 781,199 783,230 806,242 868,232 880,235 890,234 904,240 912,230 930,227 950,234 956,250 968,268 978,270 990,258 1025,214 1076,171 1082,149 1079,118 1098,94 1116,84 1118,100 1127,115 1168,115 1200,193 1160,269 1217,334 1222,346 1236,362 1240,425 1275,435 1293,422 1325,412 1376,445"],
  [1440, 370, 3, "30,90 58,106 66,106 82,83 90,80 97,68 122,62 135,51 148,31 185,39 195,55 215,77 240,97 239,140 245,184 357,229 362,234 360,243 368,257 380,256 393,260 408,257 433,264 447,255 470,254 480,247 492,256 508,259 518,268 517,282 511,292 521,302 519,320 530,316 551,308 557,298 566,303 578,290 588,297 597,316 617,334 606,343 603,357 582,363 561,388 560,402 568,408 588,407 594,420 583,438 560,431 545,441 557,463 547,483 553,500 545,507 519,498 517,520 500,557 520,569 524,578 512,600 513,626 500,643 491,662 477,667 456,700 466,713 478,711 489,702 504,718 491,726 486,746 466,776 464,802 455,808 430,804 427,833 410,850 405,863 392,865 365,882 367,889 360,905 360,940 372,960 374,975 380,988 407,993 421,1005"],
  [1180, 600, 2.942, "1178,322 1162,326 1150,322 1133,327 1128,345 1115,360 1102,370 1087,369 1080,382 1057,392 1038,393 1030,408 1012,412 1003,420 975,422 970,438 975,452 950,470 918,490 914,472 901,461 896,478 886,496 870,498 850,500 828,484 825,470 815,465 808,447 792,454 784,448 760,449 740,468 712,488 706,508 692,492 668,486 655,500 645,511 626,509 620,492 614,504 590,502 565,510 555,502 538,498 534,512 545,520 549,533 531,552 520,548 512,552 490,540 478,529 458,526 443,538 430,531 413,530 405,516 395,512 382,499 380,485 383,465 350,440 332,416 303,407 288,411 265,444 234,458 210,446 211,430 205,422 208,410 198,403 190,417 183,420 165,415 140,416 122,420 115,411 122,398 105,393 93,394 78,366 65,350 30,341"],
  [700, 620, 3, "1470,280 1466,275 1450,274 1435,284 1424,287 1425,294 1412,309 1405,298 1400,308 1383,309 1372,300 1345,302 1320,291 1323,310 1313,340 1323,362 1335,376 1325,390 1308,403 1270,405 1265,385 1263,364 1245,370 1233,393 1217,398 1212,393 1178,410 1173,416 1178,426 1168,434 1155,428 1140,408 1130,402 1138,384 1131,377 1126,383 1092,380 1045,414 1010,420 978,430 976,457 950,458 935,424 928,422 917,432 925,440 922,447 928,458 903,448 896,486 874,499 858,490 836,489 825,503 815,509 800,494 772,473 736,471 722,443 703,431 697,437 686,431 680,450 652,463 645,457 628,475 612,463 595,467 580,498 572,485 545,500 528,499 517,490 492,512 465,507 425,508 414,497 395,503 393,487 378,468 364,463 373,430 370,415 377,410 360,386 340,390 325,388 300,403 275,397 270,386 221,389 205,362 193,340 201,328 190,337 178,343 145,349 138,323 130,334 98,345 90,358 92,370 77,378 75,390 52,409 50,438 35,440 15,420"],
  [240, 620, 3, "1365,425 1340,428 1324,416 1305,416 1311,390 1303,366 1302,353 1270,364 1240,367 1222,360 1205,353 1197,342 1196,360 1184,366 1168,370 1168,383 1155,389 1132,389 1120,416 1110,424 1088,426 1080,445 1076,460 1058,448 1030,434 1036,417 1025,393 1008,372 990,379 955,377 935,364 923,362 903,347 865,365 850,362 840,364 815,316 812,296 782,304 764,287 757,312 726,331 710,318 695,312 662,334 645,328 657,314 638,304 633,283 638,262 620,253 603,264 580,268 565,277 545,285 570,314 570,325 555,327 517,344 520,357 488,364 475,359 465,348 465,361 457,360 455,349 425,362 421,370 433,387 421,402 452,444 444,452 428,425 388,437 355,414 347,394 345,367 322,354 313,340 319,325 309,312 290,303 278,290 270,267 273,247 262,236 216,239 206,221 190,237 160,237 153,213 150,190 140,186 137,167 118,165 116,156 134,136 130,115 127,90 132,72 127,52 130,38 125,33 112,34 109,27 135,5"],
  [240, 320, 3, "145,893 145,880 163,876 148,830 139,815 133,782 118,779 94,761 90,742 94,735 82,650 80,630"]
];

const islands = [
  [[1180, 600, 2.942, "1172,420 1195,419 1219,407 1240,418 1250,395 1272,370 1288,366 1297,397 1306,394 1328,418 1358,412 1372,402 1379,420 1392,408 1425,391 1431,428 1455,457 1422,508 1390,495 1340,502 1322,468 1300,440 1282,431 1255,441 1245,423 1238,424 1224,440 1188,432"]],
  [[930, 230, 3, "965,190 970,172 979,175 976,165 988,162 992,155 998,160 1000,150 1005,158 1010,152 1008,163 1001,165 1004,172 997,176 999,186 994,199 984,196 978,189 968,191"]],
  [[930, 230, 3, "970,180 980,170 984,180 990,168 996,178 986,188 980,178 974,188"]],
  [[930, 230, 3, "972,175 992,172 978,166 997,162 988,180 994,188 984,184"]],
  [[930, 230, 3, "980,243 986,240 991,244 987,250 981,248"]],
  [[930, 230, 3, "862,219 870,215 873,221 866,226"]],
  [[930, 230, 3, "965,262 975,263 979,268 970,271"]],
  [[930, 230, 3, "943,232 949,235 946,238"]],
  [[930, 230, 3, "902,236 908,232 907,239"]],
  [[930, 230, 3, "932,210 935,210 935,213 932,212"]],
  [[930, 230, 3, "864,161 867,161 867,164 864,163"]]
];

const toPoints = sheets => sheets.flatMap(([ox, oy, scale, points]) =>
  points.split(" ").map(pair => {
    const [x, y] = pair.split(",").map(Number);
    return (ox + x / scale).toFixed(1) + "," + (oy + y / scale).toFixed(1);
  })).join(" ");

const map = document.getElementById("map");
for (const shape of [boundary, ...islands]) {
  const polygon = document.createElementNS("http://www.w3.org/2000/svg", "polygon");
  polygon.setAttribute("class", "land");
  polygon.setAttribute("points", toPoints(shape));
  map.appendChild(polygon);
}
```
